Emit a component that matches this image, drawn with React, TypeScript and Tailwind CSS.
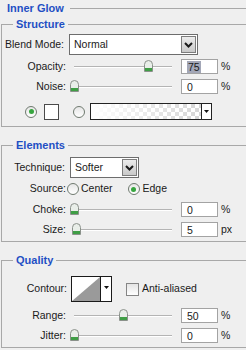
import React from "react";

function Legend({ children }: { children: React.ReactNode }) {
  return (
    <legend className="ml-[11px] px-[3px] text-[11px] font-bold leading-[14px] text-[#1f4fc4]">
      {children}
    </legend>
  );
}

function Chevron() {
  return (
    <svg width="9" height="6" viewBox="0 0 9 6">
      <path d="M1 1 L4.5 4.5 L8 1" fill="none" stroke="#1a1a1a" strokeWidth="2" />
    </svg>
  );
}

function Select({ value, className }: { value: string; className: string }) {
  return (
    <div className={`flex h-[21px] border border-[#6d6d6d] bg-white ${className}`}>
      <span className="flex-1 pl-[4px] leading-[19px]">{value}</span>
      <span className="m-[1px] flex w-[15px] items-center justify-center border border-[#7d7d7d] bg-[linear-gradient(#ececec,#c9c9c9)]">
        <Chevron />
      </span>
    </div>
  );
}

function Thumb() {
  return (
    <svg width="9" height="12" viewBox="0 0 9 12">
      <path d="M0.5 11.5 V4.5 Q0.5 0.5 4.5 0.5 Q8.5 0.5 8.5 4.5 V11.5 Z" fill="#e9eee9" stroke="#8a918a" />
      <rect x="1" y="8" width="7" height="3" fill="#3f9e45" />
    </svg>
  );
}

function Slider({ value, max }: { value: number; max: number }) {
  const left = Math.round((value / max) * 98) - 4;
  return (
    <div className="relative ml-[8px] h-[15px] w-[98px]">
      <div className="absolute left-0 right-0 top-[7px] h-[2px] border-t border-[#b4b4b4] border-b border-b-white" />
      <div className="absolute top-[1px]" style={{ left }}>
        <Thumb />
      </div>
    </div>
  );
}

function NumberRow({
  label,
  value,
  max,
  unit,
  selected,
  className,
}: {
  label: string;
  value: number;
  max: number;
  unit: string;
  selected?: boolean;
  className: string;
}) {
  return (
    <div className={`flex h-[15px] items-center ${className}`}>
      <span className="w-[64px] text-right">{label}</span>
      <Slider value={value} max={max} />
      <div className="ml-[9px] flex h-[15px] w-[37px] items-center border border-[#a3a3a3] bg-white pl-[5px]">
        <span className={selected ? "bg-[#a3a7b7] px-[1px] leading-[12px]" : "leading-[12px]"}>{value}</span>
      </div>
      <span className="ml-[3px]">{unit}</span>
    </div>
  );
}

function Radio({ on }: { on?: boolean }) {
  return (
    <span className="flex h-[12px] w-[12px] items-center justify-center rounded-full border border-[#6f7a6f] bg-[linear-gradient(#e6e6e6,#ffffff)]">
      {on && <span className="h-[5px] w-[5px] rounded-full bg-[#36a53e]" />}
    </span>
  );
}

function DownTri() {
  return (
    <svg width="5" height="3" viewBox="0 0 5 3">
      <path d="M0 0 H5 L2.5 3 Z" fill="#111" />
    </svg>
  );
}

export default function App() {
  return (
    <div className="h-[350px] w-[246px] overflow-hidden bg-[#efefef] font-['Liberation_Sans',Arial,sans-serif] text-[10.5px] text-[#1a1a1a]">
      <div className="flex h-[16px] items-center pl-[7px]">
        <span className="text-[11px] font-bold text-[#1f4fc4]">Inner Glow</span>
        <span className="ml-[6px] flex-1 border-t border-[#a8a8a8]" />
      </div>

      <fieldset className="ml-[1px] mt-[1px] w-[260px] border border-[#a8a8a8] pb-[6px]">
        <Legend>Structure</Legend>
        <div className="mt-[3px] flex items-center">
          <span className="w-[62px] text-right">Blend Mode:</span>
          <Select value="Normal" className="ml-[5px] w-[129px]" />
        </div>
        <NumberRow label="Opacity:" value={75} max={100} unit="%" selected className="mt-[4px]" />
        <NumberRow label="Noise:" value={0} max={100} unit="%" className="mt-[5px]" />
        <div className="mt-[9px] flex h-[17px] items-center pl-[23px]">
          <Radio on />
          <span className="ml-[7px] h-[16px] w-[15px] border border-[#4a4a4a] bg-white" />
          <span className="ml-[14px]">
            <Radio />
          </span>
          <div className="ml-[5px] flex h-[17px] w-[122px] border border-[#222]">
            <span className="flex-1 bg-[linear-gradient(to_right,#ffffff,rgba(255,255,255,0)),conic-gradient(#d6d6d6_25%,#ffffff_0_50%,#d6d6d6_0_75%,#ffffff_0)] bg-[length:100%_100%,8px_8px]" />
            <span className="flex w-[10px] items-center justify-center border-l border-[#222] bg-white">
              <DownTri />
            </span>
          </div>
        </div>
      </fieldset>

      <fieldset className="ml-[1px] mt-[11px] w-[260px] border border-[#a8a8a8] pb-[4px]">
        <Legend>Elements</Legend>
        <div className="mt-[5px] flex items-center">
          <span className="w-[63px] text-right">Technique:</span>
          <Select value="Softer" className="ml-[5px] w-[69px]" />
        </div>
        <div className="mt-[4px] flex h-[14px] items-center">
          <span className="w-[64px] text-right">Source:</span>
          <span className="ml-[1px]">
            <Radio />
          </span>
          <span className="ml-[2px]">Center</span>
          <span className="ml-[15px]">
            <Radio on />
          </span>
          <span className="ml-[3px]">Edge</span>
        </div>
        <NumberRow label="Choke:" value={0} max={100} unit="%" className="mt-[6px]" />
        <NumberRow label="Size:" value={5} max={250} unit="px" className="mt-[5px]" />
      </fieldset>

      <fieldset className="ml-[1px] mt-[11px] w-[260px] border border-[#a8a8a8] pb-[4px]">
        <Legend>Quality</Legend>
        <div className="mt-[9px] flex h-[26px] items-center">
          <span className="w-[65px] text-right">Contour:</span>
          <div className="ml-[4px] flex h-[26px] w-[41px] border border-[#1a1a1a] bg-white">
            <svg width="28" height="24" viewBox="0 0 28 24" className="shrink-0">
              <path d="M0 24 L28 0 V24 Z" fill="#9a9a9a" />
            </svg>
            <span className="flex flex-1 items-start justify-center border-l border-[#1a1a1a] pt-[9px]">
              <DownTri />
            </span>
          </div>
          <span className="ml-[14px] h-[13px] w-[13px] border border-[#858585] bg-[linear-gradient(#e4e4e4,#ffffff)]" />
          <span className="ml-[3px]">Anti-aliased</span>
        </div>
        <NumberRow label="Range:" value={50} max={100} unit="%" className="mt-[6px]" />
        <NumberRow label="Jitter:" value={0} max={100} unit="%" className="mt-[5px]" />
      </fieldset>
    </div>
  );
}
